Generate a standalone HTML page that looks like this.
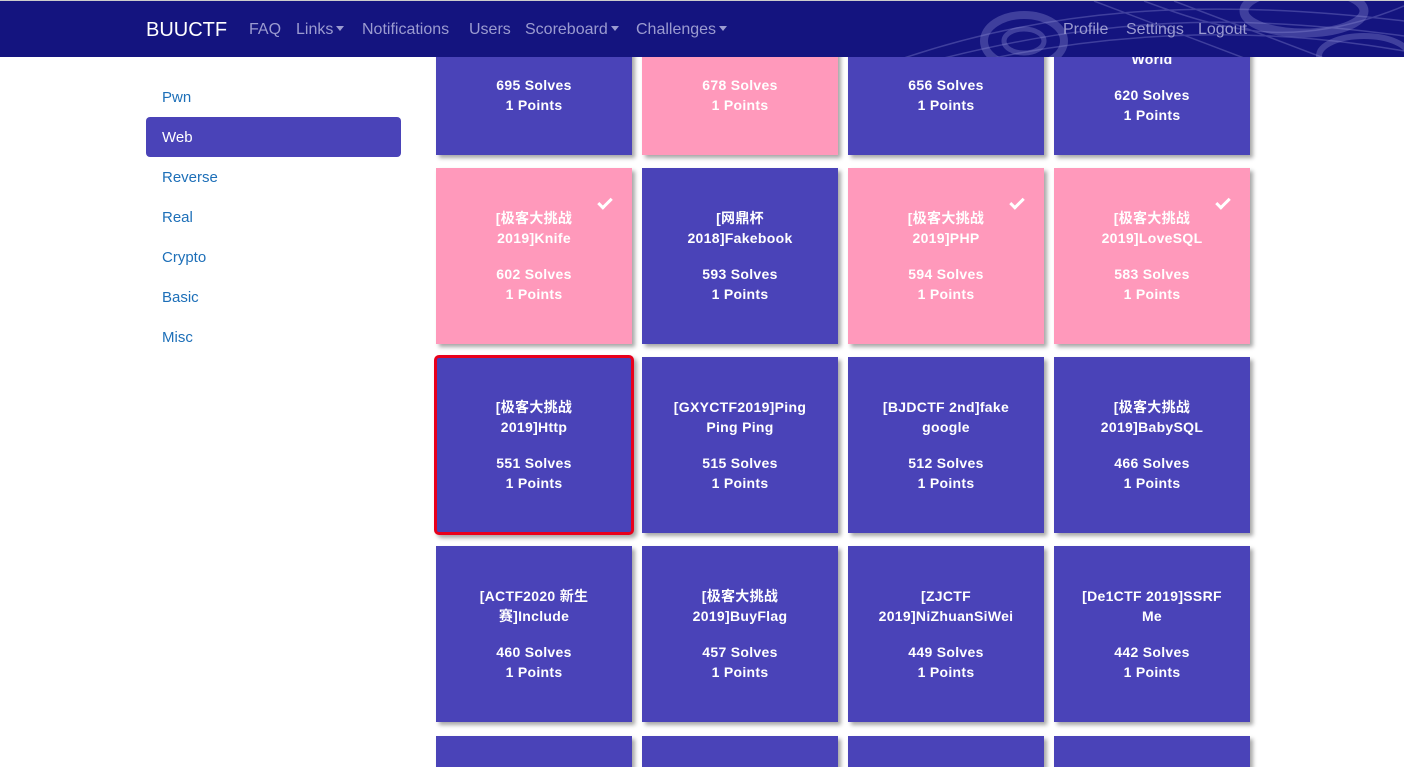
<!DOCTYPE html>
<html><head><meta charset="utf-8"><style>
*{box-sizing:border-box;margin:0;padding:0}
html,body{width:1404px;height:767px;overflow:hidden}
body{background:#fff;font-family:"Liberation Sans","Noto Sans CJK SC",sans-serif;position:relative}
.nav{position:absolute;left:0;top:0;width:1404px;height:57px;background:#14147f;border-top:1px solid #ccc;z-index:5;overflow:hidden}
.nav span{position:absolute;top:20px;font-size:16px;color:#9b9bd0}
.nav .brand{color:#fff;font-size:20px;top:18px}
.caret{display:inline-block;width:0;height:0;border-left:4px solid transparent;border-right:4px solid transparent;border-top:5px solid #9b9bd0;vertical-align:3px;margin-left:3px}
.side a{position:absolute;left:146px;width:255px;height:40px;line-height:42px;padding-left:16px;font-size:15px;color:#1d6fb8;border-radius:4px}
.side a.act{background:#4a43b8;color:#fff}
.card{position:absolute;width:196px;height:176px;background:#4a43b8;color:#fff;font-weight:bold;font-size:14px;line-height:20px;text-align:center;display:flex;flex-direction:column;justify-content:center;align-items:center;box-shadow:3px 3px 4px rgba(0,0,0,.35);padding:0 14px;letter-spacing:.3px}
.card.p{background:#ff99bb}
.card .t{margin-bottom:16px}
.card.sel{border:3px solid #e8001c;border-radius:5px}
.card.tp{padding-top:4px}
.card.tp .t{visibility:hidden;margin-bottom:12px}
.ck{position:absolute;right:20px;top:30px;width:14px;height:8px;border-left:3px solid #fff;border-bottom:3px solid #fff;transform:rotate(-45deg)}
</style></head><body>
<div class="nav">
<svg width="560" height="57" style="position:absolute;right:0;top:0" fill="none" stroke="#8f8fd8" stroke-opacity=".35">
<ellipse cx="180" cy="40" rx="40" ry="26" stroke-width="8"/><ellipse cx="180" cy="40" rx="20" ry="12" stroke-width="5"/>
<ellipse cx="460" cy="10" rx="60" ry="22" stroke-width="9"/><ellipse cx="520" cy="55" rx="45" ry="20" stroke-width="6"/>
<path d="M60 57 C200 10 350 -5 560 20 M100 57 C250 20 380 10 560 35 M150 57 C280 30 420 25 560 50 M300 0 C380 30 450 50 560 5 M250 0 L400 57 M330 0 L480 57" stroke-width="1.5"/>
</svg>
<span class="brand" style="left:146px">BUUCTF</span>
<span style="left:249px">FAQ</span>
<span style="left:296px">Links<i class="caret"></i></span>
<span style="left:362px">Notifications</span>
<span style="left:469px">Users</span>
<span style="left:525px">Scoreboard<i class="caret"></i></span>
<span style="left:636px">Challenges<i class="caret"></i></span>
<span style="left:1063px">Profile</span>
<span style="left:1126px">Settings</span>
<span style="left:1198px">Logout</span>
</div>
<div class="side">
<a style="top:77px">Pwn</a><a class="act" style="top:117px">Web</a><a style="top:157px">Reverse</a><a style="top:197px">Real</a><a style="top:237px">Crypto</a><a style="top:277px">Basic</a><a style="top:317px">Misc</a>
</div>
<div class="card tp" style="left:436px;top:-21px"><div class="t">[HCTF 2018]WarmUp<br>Web</div>695 Solves<br>1 Points</div>
<div class="card p tp" style="left:642px;top:-21px"><div class="t">[强网杯 2019]随便<br>注</div>678 Solves<br>1 Points</div>
<div class="card tp" style="left:848px;top:-21px"><div class="t">[SUCTF<br>2019]EasySQL</div>656 Solves<br>1 Points</div>
<div class="card" style="left:1054px;top:-21px"><div class="t">[CISCN2019 华北赛区<br>Day2 Web1]Hack<br>World</div>620 Solves<br>1 Points</div>

<div class="card p" style="left:436px;top:168px"><i class="ck"></i><div class="t">[极客大挑战<br>2019]Knife</div>602 Solves<br>1 Points</div>
<div class="card" style="left:642px;top:168px"><div class="t">[网鼎杯<br>2018]Fakebook</div>593 Solves<br>1 Points</div>
<div class="card p" style="left:848px;top:168px"><i class="ck"></i><div class="t">[极客大挑战<br>2019]PHP</div>594 Solves<br>1 Points</div>
<div class="card p" style="left:1054px;top:168px"><i class="ck"></i><div class="t">[极客大挑战<br>2019]LoveSQL</div>583 Solves<br>1 Points</div>

<div class="card sel" style="left:434px;top:355px;width:200px;height:180px"><div class="t">[极客大挑战<br>2019]Http</div>551 Solves<br>1 Points</div>
<div class="card" style="left:642px;top:357px"><div class="t">[GXYCTF2019]Ping<br>Ping Ping</div>515 Solves<br>1 Points</div>
<div class="card" style="left:848px;top:357px"><div class="t">[BJDCTF 2nd]fake<br>google</div>512 Solves<br>1 Points</div>
<div class="card" style="left:1054px;top:357px"><div class="t">[极客大挑战<br>2019]BabySQL</div>466 Solves<br>1 Points</div>

<div class="card" style="left:436px;top:546px"><div class="t">[ACTF2020 新生<br>赛]Include</div>460 Solves<br>1 Points</div>
<div class="card" style="left:642px;top:546px"><div class="t">[极客大挑战<br>2019]BuyFlag</div>457 Solves<br>1 Points</div>
<div class="card" style="left:848px;top:546px"><div class="t">[ZJCTF<br>2019]NiZhuanSiWei</div>449 Solves<br>1 Points</div>
<div class="card" style="left:1054px;top:546px"><div class="t">[De1CTF 2019]SSRF<br>Me</div>442 Solves<br>1 Points</div>

<div class="card" style="left:436px;top:736px;height:31px"></div>
<div class="card" style="left:642px;top:736px;height:31px"></div>
<div class="card" style="left:848px;top:736px;height:31px"></div>
<div class="card" style="left:1054px;top:736px;height:31px"></div>
</body></html>
